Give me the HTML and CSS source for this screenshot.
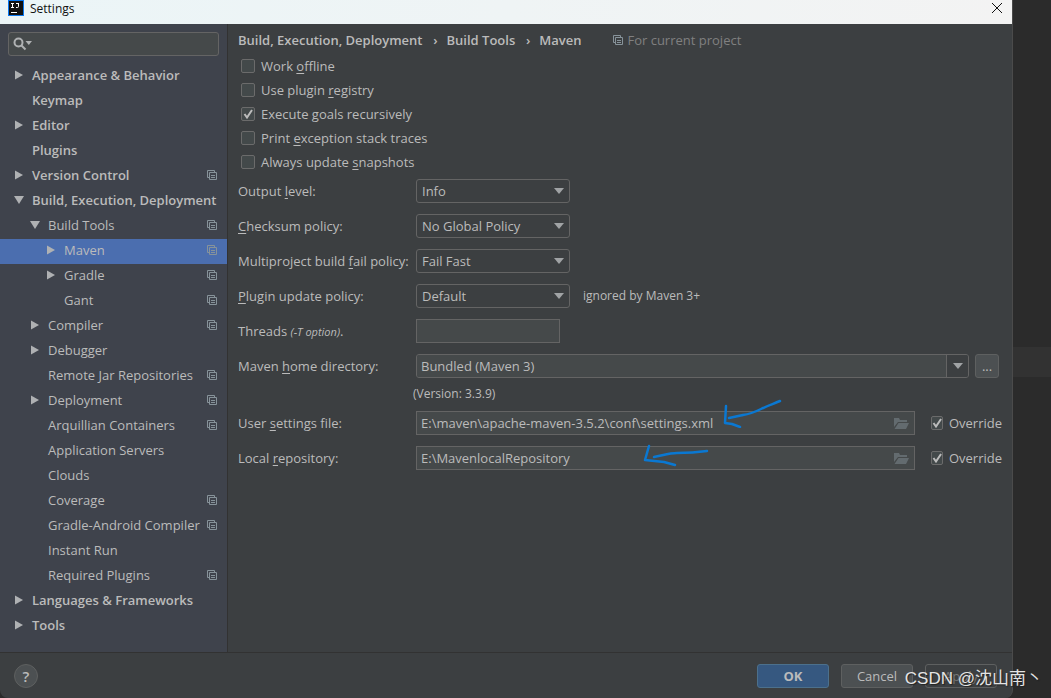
FILE: index.html
```html
<!DOCTYPE html>
<html lang="en">
<head>
<meta charset="utf-8">
<title>Settings</title>
<link rel="stylesheet" href="styles.css">
</head>
<body>
<svg class="defs" aria-hidden="true">
  <symbol id="copy" viewBox="0 0 10 10"><path d="M2 7.500H.5V.5h7V2M2.500 2.500h7v7h-7zM4 5.500h4M4 7.500h4" fill="none" stroke="currentColor"/></symbol>
  <symbol id="right" viewBox="0 0 8 10"><path d="M0 .5 8 5 0 9.500z" fill="currentColor"/></symbol>
  <symbol id="down" viewBox="0 0 10 8"><path d="M0 0h10L5 8z" fill="currentColor"/></symbol>
  <symbol id="caret" viewBox="0 0 10 6"><path d="M0 0h10L5 6z" fill="currentColor"/></symbol>
  <symbol id="folder" viewBox="0 0 15 11"><path d="M0 9V0h5l1 2h7v2H4L0 9zM4.500 5H15l-3 6H.5z" fill="currentColor"/></symbol>
</svg>
<div class="desktop">
  <div class="dialog">
    <header class="titlebar">
      <svg class="logo" viewBox="0 0 16 16" aria-hidden="true"><path fill="#0a78f0" d="M0 0h16v16H0z"/><path fill="#111" d="M1 1h14v14H1z"/><path d="M3 3.500h3M4.500 3.500v4M3 7.500h3M8 3.500h3M10.500 3.500v3q0 1-1 1H8M3 12.500h6" fill="none" stroke="#fff"/></svg>
      <h1 class="title">Settings</h1>
      <button class="close" aria-label="Close"><svg viewBox="0 0 10 10"><path d="m0 0 10 10M10 0 0 10" fill="none" stroke="#111"/></svg></button>
    </header>
    <div class="body">
      <nav class="sidebar">
        <label class="search">
          <svg viewBox="0 0 19 14" aria-hidden="true"><circle cx="5.500" cy="5.500" r="4" fill="none" stroke="#afb1b3" stroke-width="2"/><path d="m8.500 8.500 4 4" stroke="#afb1b3" stroke-width="2"/><path d="M12.500 4H19l-3.200 4z" fill="#afb1b3"/></svg>
          <input type="text" aria-label="Search settings">
        </label>
        <ul class="tree">
          <li class="top"><svg class="right"><use href="#right"/></svg><span>Appearance &amp; Behavior</span></li>
          <li class="top"><span>Keymap</span></li>
          <li class="top"><svg class="right"><use href="#right"/></svg><span>Editor</span></li>
          <li class="top"><span>Plugins</span></li>
          <li class="top"><svg class="right"><use href="#right"/></svg><span>Version Control</span><svg class="copy"><use href="#copy"/></svg></li>
          <li class="top"><svg class="down"><use href="#down"/></svg><span>Build, Execution, Deployment</span></li>
          <li class="mid"><svg class="down"><use href="#down"/></svg><span>Build Tools</span><svg class="copy"><use href="#copy"/></svg></li>
          <li class="leaf selected"><svg class="right"><use href="#right"/></svg><span>Maven</span><svg class="copy"><use href="#copy"/></svg></li>
          <li class="leaf"><svg class="right"><use href="#right"/></svg><span>Gradle</span><svg class="copy"><use href="#copy"/></svg></li>
          <li class="leaf"><span>Gant</span><svg class="copy"><use href="#copy"/></svg></li>
          <li class="mid"><svg class="right"><use href="#right"/></svg><span>Compiler</span><svg class="copy"><use href="#copy"/></svg></li>
          <li class="mid"><svg class="right"><use href="#right"/></svg><span>Debugger</span></li>
          <li class="mid"><span>Remote Jar Repositories</span><svg class="copy"><use href="#copy"/></svg></li>
          <li class="mid"><svg class="right"><use href="#right"/></svg><span>Deployment</span><svg class="copy"><use href="#copy"/></svg></li>
          <li class="mid"><span>Arquillian Containers</span><svg class="copy"><use href="#copy"/></svg></li>
          <li class="mid"><span>Application Servers</span></li>
          <li class="mid"><span>Clouds</span></li>
          <li class="mid"><span>Coverage</span><svg class="copy"><use href="#copy"/></svg></li>
          <li class="mid"><span>Gradle-Android Compiler</span><svg class="copy"><use href="#copy"/></svg></li>
          <li class="mid"><span>Instant Run</span></li>
          <li class="mid"><span>Required Plugins</span><svg class="copy"><use href="#copy"/></svg></li>
          <li class="top"><svg class="right"><use href="#right"/></svg><span>Languages &amp; Frameworks</span></li>
          <li class="top"><svg class="right"><use href="#right"/></svg><span>Tools</span></li>
        </ul>
      </nav>
      <main class="main">
        <div class="crumbs">
          <span>Build, Execution, Deployment</span><span class="sep">›</span><span>Build Tools</span><span class="sep">›</span><span>Maven</span>
          <span class="scope"><svg class="copy"><use href="#copy"/></svg>For current project</span>
        </div>
        <div class="checks">
          <label class="check"><input type="checkbox"><span>Work <u>o</u>ffline</span></label>
          <label class="check"><input type="checkbox"><span>Use plugin <u>r</u>egistry</span></label>
          <label class="check"><input type="checkbox" checked><span>Execute <u>g</u>oals recursively</span></label>
          <label class="check"><input type="checkbox"><span>Print <u>e</u>xception stack traces</span></label>
          <label class="check"><input type="checkbox"><span>Always update <u>s</u>napshots</span></label>
        </div>
        <div class="form">
          <label for="output">Output <u>l</u>evel:</label>
          <div class="line"><span class="select"><select id="output"><option>Info</option></select><svg class="caret"><use href="#caret"/></svg></span></div>
          <label for="checksum"><u>C</u>hecksum policy:</label>
          <div class="line"><span class="select"><select id="checksum"><option>No Global Policy</option></select><svg class="caret"><use href="#caret"/></svg></span></div>
          <label for="fail">Multiproject build <u>f</u>ail policy:</label>
          <div class="line"><span class="select"><select id="fail"><option>Fail Fast</option></select><svg class="caret"><use href="#caret"/></svg></span></div>
          <label for="update"><u>P</u>lugin update policy:</label>
          <div class="line"><span class="select"><select id="update"><option>Default</option></select><svg class="caret"><use href="#caret"/></svg></span><span class="note">ignored by Maven 3+</span></div>
          <label for="threads">Threads <i>(-T option)</i>.</label>
          <div class="line"><input class="field short" id="threads" type="text"></div>
          <label for="home">Maven <u>h</u>ome directory:</label>
          <div class="line home"><span class="combo"><input class="field" id="home" type="text" value="Bundled (Maven 3)"><button aria-label="Show choices"><svg class="caret"><use href="#caret"/></svg></button></span><button class="browse">...</button></div>
          <p class="version">(Version: 3.3.9)</p>
          <label for="settings">User <u>s</u>ettings file:</label>
          <div class="line path"><span class="file"><input class="field" id="settings" type="text" value="E:\maven\apache-maven-3.5.2\conf\settings.xml"><button aria-label="Browse settings file"><svg><use href="#folder"/></svg></button>
            <svg class="arrow first" viewBox="0 0 60 30" aria-hidden="true"><path d="M57 3C50 6 44 8 38 11S28 16 20 17L6 20M3 8l-1 17 7 1 8 3"/></svg></span>
            <label class="check"><input type="checkbox" checked><span>Override</span></label></div>
          <label for="repo">Local <u>r</u>epository:</label>
          <div class="line path"><span class="file"><input class="field" id="repo" type="text" value="E:\MavenlocalRepository"><button aria-label="Browse repository"><svg><use href="#folder"/></svg></button>
            <svg class="arrow second" viewBox="0 0 66 24" aria-hidden="true"><path d="M64 7c-14 2-22 2-30 2S18 12 11 13M6 2 2 16l19 2 11 3"/></svg></span>
            <label class="check"><input type="checkbox" checked><span>Override</span></label></div>
        </div>
      </main>
    </div>
    <footer class="footer">
      <button class="help" aria-label="Help">?</button>
      <button class="btn primary">OK</button>
      <button class="btn">Cancel</button>
      <button class="btn disabled" disabled>Apply</button>
    </footer>
  </div>
  <div class="editor"></div>
  <div class="watermark">CSDN @沈山南丶</div>
</div>
</body>
</html>
```
FILE: styles.css
```css
* { box-sizing: border-box; }
body {
  margin: 0;
  background: #2b2b2b;
  color: #bbb;
  font: 13px/16px "Open Sans", "Noto Sans CJK SC", sans-serif;
}
button, input, select { font: inherit; color: inherit; margin: 0; }
button { padding: 0; border: 0; background: none; }
svg { flex: none; display: block; }
u { text-underline-offset: 2px; }
.defs { position: absolute; width: 0; height: 0; }
.desktop { position: relative; display: flex; min-height: 100vh; overflow: hidden; }
.dialog {
  flex: 1;
  display: flex;
  flex-direction: column;
  background: #3c3f41;
  border-right: 1px solid #4b4b4b;
  border-radius: 0 0 8px 8px;
  overflow: hidden;
}
.editor {
  flex: 0 0 38px;
  background: linear-gradient(transparent 347px, #323232 347px, #323232 377px, transparent 377px);
}

.titlebar {
  display: flex;
  align-items: center;
  height: 24px;
  padding: 0 10px 8px 8px;
  background: linear-gradient(90deg, #ebf5f7, #f3f3f3);
  color: #111;
}
.logo { width: 16px; height: 16px; }
.title { flex: 1; margin: 0 0 0 6px; padding-top: 2px; font-size: 12px; font-weight: 400; }
.close svg { width: 10px; height: 10px; }

.body { flex: 1; display: flex; }
.sidebar {
  flex: 0 0 228px;
  min-width: 0;
  background: #3f434c;
  border-right: 1px solid #323232;
}
.search {
  display: flex;
  align-items: center;
  height: 24px;
  margin: 8px;
  padding: 0 4px;
  border: 1px solid #646464;
  border-radius: 3px;
  background: #45494a;
}
.search svg { width: 19px; height: 14px; }
.search input { flex: 1; min-width: 0; border: 0; background: none; outline: 0; }
.tree { margin: 0; padding: 0; list-style: none; }
.tree li { display: flex; align-items: center; height: 25px; padding: 0 10px 3px 0; }
.tree span { flex: 1; min-width: 0; white-space: nowrap; }
.tree .top { padding-left: 32px; font-weight: 600; }
.tree .mid { padding-left: 48px; }
.tree .leaf { padding-left: 64px; }
.tree .selected { background: #4b6eaf; }
.right, .down { color: #afb1b3; }
.right { width: 8px; height: 10px; margin: 0 9px 0 -17px; }
.down { width: 10px; height: 8px; margin: 0 8px 0 -18px; }
.copy { width: 10px; height: 10px; color: #87939a; }

.main { flex: 1; min-width: 0; padding: 8px 10px; }
.crumbs { display: flex; align-items: center; height: 16px; font-weight: 600; white-space: nowrap; }
.sep { width: 24px; padding-left: 2px; text-align: center; }
.scope { display: flex; align-items: center; gap: 4px; margin-left: 32px; font-weight: 400; color: #808080; }
.checks { padding: 6px 0 0 3px; }
.check { display: flex; align-items: center; gap: 6px; height: 24px; }
.check input {
  appearance: none;
  width: 14px;
  height: 14px;
  border: 1px solid #6b6b6b;
  border-radius: 2px;
  background: #43494a;
}
.check input:checked {
  background: #43494a url("data:image/svg+xml,%3Csvg xmlns='http://www.w3.org/2000/svg' viewBox='0 0 12 12'%3E%3Cpath d='M2.500 6 5 9.500 10 2' fill='none' stroke='%23bbb' stroke-width='2'/%3E%3C/svg%3E") center / 12px 12px;
}

.form {
  display: grid;
  grid-template-columns: 178px 1fr;
  align-items: center;
  row-gap: 11px;
  padding-top: 5px;
}
.form > label { white-space: nowrap; }
.form i { font-size: 11px; }
.line { display: flex; align-items: center; height: 24px; min-width: 0; }
.select { position: relative; width: 154px; }
.select select {
  appearance: none;
  display: block;
  width: 100%;
  height: 24px;
  padding: 0 5px;
  border: 1px solid #646464;
  border-radius: 3px;
  background: #3c3f41;
}
.caret { width: 10px; height: 6px; color: #a0a3a5; }
.select .caret { position: absolute; top: 9px; right: 6px; pointer-events: none; }
.note { margin-left: 13px; font-size: 12px; }
.field { height: 24px; padding: 0 4px; border: 1px solid #646464; background: #45494a; outline: 0; }
.short { width: 144px; }
.home { gap: 6px; padding-right: 3px; }
.combo { flex: 1; display: flex; height: 24px; border: 1px solid #646464; border-radius: 3px; background: #45494a; overflow: hidden; }
.combo .field { flex: 1; min-width: 0; height: 22px; border: 0; }
.combo button { display: grid; place-items: center; width: 22px; border-left: 1px solid #646464; background: #3c3f41; }
.browse { width: 24px; height: 24px; border: 1px solid #5e6060; border-radius: 3px; background: #4c5052; }
.version { grid-column: 2; margin: -2px 0 -1px -3px; font-size: 12px; line-height: 14px; }
.path { gap: 16px; }
.path .check { width: 71px; }
.file { position: relative; flex: 1; display: flex; height: 24px; border: 1px solid #646464; background: #45494a; }
.file .field { flex: 1; min-width: 0; height: 22px; border: 0; }
.file button { width: 20px; color: #636b6f; }
.file button svg { width: 15px; height: 11px; }
.arrow { position: absolute; fill: none; stroke: #0a78d2; stroke-width: 2.500; stroke-linecap: round; stroke-linejoin: round; pointer-events: none; }
.first { left: 306px; top: -14px; width: 60px; height: 30px; }
.second { left: 226px; top: -3px; width: 66px; height: 24px; }

.footer {
  display: flex;
  align-items: center;
  gap: 12px;
  height: 46px;
  padding: 0 15px 0 14px;
  border-top: 1px solid #323232;
}
.help { width: 24px; height: 24px; margin-right: auto; border: 1px solid #5e6060; border-radius: 50%; background: #4c5052; font-size: 15px; font-weight: 600; }
.btn { width: 72px; height: 24px; border: 1px solid #5e6060; border-radius: 3px; background: #4c5052; }
.primary { border-color: #4c708c; background: #365880; font-weight: 700; }
.disabled { background: #3c3f41; color: #777; }
.watermark {
  position: absolute;
  right: 8px;
  bottom: 6px;
  color: #e4e4e4;
  font: 17px/26px "Liberation Sans", "Noto Sans CJK SC", sans-serif;
  text-shadow: 1px 1px 1px #222;
  white-space: nowrap;
}
```
